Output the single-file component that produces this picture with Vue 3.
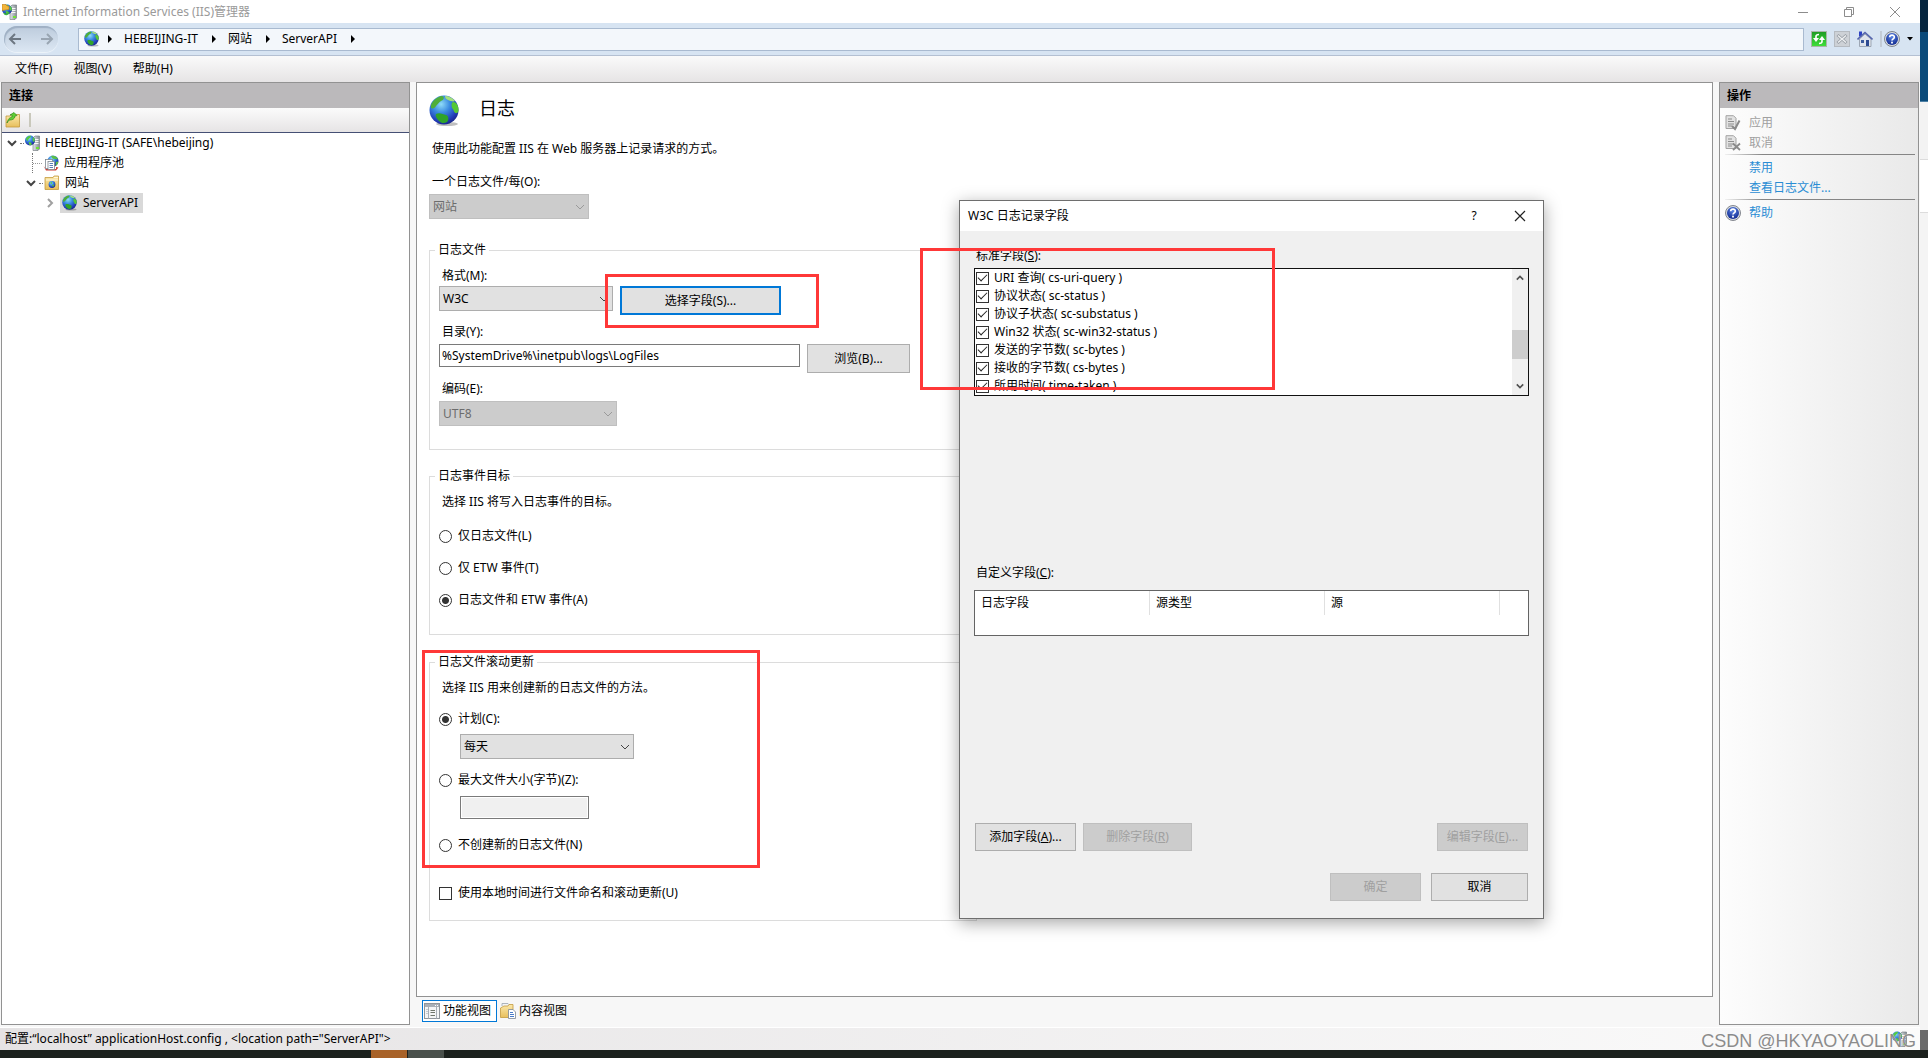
<script setup>
import { ref } from 'vue'

const crumbs = ['HEBEIJING-IT', '网站', 'ServerAPI']
const menus = ['文件(F)', '视图(V)', '帮助(H)']

const directory = ref('%SystemDrive%\\inetpub\\logs\\LogFiles')
const target = ref('both')
const rollover = ref('schedule')
const localTime = ref(false)
const maxSize = ref('')

const targets = [
  { id: 'file', label: '仅日志文件(L)' },
  { id: 'etw', label: '仅 ETW 事件(T)' },
  { id: 'both', label: '日志文件和 ETW 事件(A)' },
]

const fields = ref([
  { id: 'cs-uri-query', label: 'URI 查询( cs-uri-query )', on: true },
  { id: 'sc-status', label: '协议状态( sc-status )', on: true },
  { id: 'sc-substatus', label: '协议子状态( sc-substatus )', on: true },
  { id: 'sc-win32-status', label: 'Win32 状态( sc-win32-status )', on: true },
  { id: 'sc-bytes', label: '发送的字节数( sc-bytes )', on: true },
  { id: 'cs-bytes', label: '接收的字节数( cs-bytes )', on: true },
  { id: 'time-taken', label: '所用时间( time-taken )', on: true },
])
</script>

<template>
  <div class="screen">
    <svg class="sprite" aria-hidden="true">
      <defs>
        <radialGradient id="sea" cx="0.4" cy="0.3" r="0.75">
          <stop offset="0" stop-color="#8fdcf8" />
          <stop offset="0.4" stop-color="#3a8be0" />
          <stop offset="0.8" stop-color="#2138b4" />
          <stop offset="1" stop-color="#16237c" />
        </radialGradient>
        <linearGradient id="folder" x1="0" y1="0" x2="0" y2="1">
          <stop offset="0" stop-color="#fbe9ac" />
          <stop offset="1" stop-color="#e8bf5c" />
        </linearGradient>
        <linearGradient id="tower" x1="0" y1="0" x2="1" y2="0">
          <stop offset="0" stop-color="#e3e7ea" />
          <stop offset="1" stop-color="#848c92" />
        </linearGradient>
        <linearGradient id="green" x1="0" y1="0" x2="0" y2="1">
          <stop offset="0" stop-color="#1f9a24" />
          <stop offset="1" stop-color="#3fe03a" />
        </linearGradient>
        <radialGradient id="helpfill" cx="0.5" cy="0.3" r="0.7">
          <stop offset="0" stop-color="#5b86e6" />
          <stop offset="1" stop-color="#10298f" />
        </radialGradient>
      </defs>
      <symbol id="globe" viewBox="0 0 32 32">
        <ellipse cx="18" cy="29" rx="11" ry="2" fill="#000" opacity="0.25" />
        <circle cx="15" cy="15" r="14.500" fill="url(#sea)" />
        <path d="M2 10C4 5 9 1.500 13 1C16 2 15 5 12 6C10 7 9 9 7 11C6 13 4 14 2 13Z" fill="#4fae3a" />
        <path d="M16 1C20 1 24 3 26 6C24 7 21 6 19 5C17 4 16 3 16 1Z" fill="#a5e07c" />
        <path d="M24 7C28 7 30 12 29.500 16C28 20 25 18 24.500 15C22 12 22 8 24 7Z" fill="#55c834" />
        <path d="M7 19C10 17 14 19 17 20C20 21 20 25 18 27C15 29 12 28 10 26C8 24 6 21 7 19Z" fill="#2fa32a" />
      </symbol>
      <symbol id="server" viewBox="0 0 16 16">
        <path d="M8 3L10 1H14.500V14L13 15.500H8Z" fill="url(#tower)" stroke="#6b7379" stroke-width="0.6" />
        <path d="M9 4.500H13.500M9 6.500H13.500M9 8.500H13.500" stroke="#fff" stroke-width="0.9" />
        <rect x="11" y="12" width="3" height="2" fill="#6fe336" />
        <circle cx="5" cy="5.500" r="5" fill="url(#sea)" />
        <path d="M1 3.500C3 1 5 .500 6 1C6 3 3 3 3 6C2 6 1 5 1 3.500ZM8 2C10 3 10.500 6 9 7C8 7 7 4 8 2ZM4 7C6 7 7 8 6.500 10C5 11 3 9 4 7Z" fill="#57c93f" />
      </symbol>
      <symbol id="appicon" viewBox="0 0 16 16">
        <use href="#server" />
        <path d="M0 .500H4L5 2H7V5.500L0 6.500Z" fill="#f3b53b" stroke="#b87a14" stroke-width="0.6" />
        <path d="M2 9C3 11 6 11 7 8" fill="none" stroke="#3bb340" stroke-width="1.600" />
      </symbol>
      <symbol id="pool" viewBox="0 0 16 16">
        <circle cx="10" cy="6" r="5.500" fill="url(#sea)" />
        <path d="M8 1C11 0 14 2 15 4C13 5 12 3 10 4ZM13 7L15.400 6.500C15 9 14 10 12.500 11Z" fill="#5bc043" />
        <path d="M0.500 11L3 15.500H13L15.500 12.500L13 12V14H3Z" fill="#cf3b32" />
        <rect x="2.500" y="4.500" width="7" height="9" fill="#fff" stroke="#7d8790" stroke-width="0.800" />
        <rect x="5" y="6.500" width="6.500" height="8" fill="#fff" stroke="#7d8790" stroke-width="0.800" />
        <path d="M6.500 8.500H10M6.500 10.500H10M6.500 12.500H10" stroke="#4b6fae" stroke-width="0.900" />
      </symbol>
      <symbol id="sites" viewBox="0 0 16 16">
        <path d="M1 2.500H9L10 1H14.500V14.500H1Z" fill="url(#folder)" stroke="#c49a3d" stroke-width="0.800" />
        <path d="M10 2.500H14M2 5H14" stroke="#fff8dc" />
        <circle cx="8" cy="9.500" r="3.400" fill="url(#sea)" />
        <path d="M6 8L8 7L8 9ZM8 10L10.500 9.500L9 12Z" fill="#55c43c" />
      </symbol>
      <symbol id="connect" viewBox="0 0 16 16">
        <path d="M1 4H5L6 2.500H14.500V15H1Z" fill="url(#folder)" stroke="#c49a3d" stroke-width="0.800" />
        <path d="M2 11C3 7 5 5 7 5V3L5 3L9 .500L12 3.500L10 4C10 7 7 8 5 8C4 8 3 9 2 11Z" fill="#5fce35" stroke="#2f8a1c" stroke-width="0.700" />
      </symbol>
      <symbol id="help" viewBox="0 0 16 16">
        <circle cx="8" cy="8" r="7.500" fill="#d9dde2" stroke="#767b82" stroke-width="0.900" />
        <circle cx="8" cy="8" r="6" fill="url(#helpfill)" />
        <path d="M5.700 6.300C5.700 3.400 10.400 3.500 10.300 6.200C10.200 7.800 8 7.900 8 9.600" fill="none" stroke="#fff" stroke-width="1.700" />
        <rect x="7.100" y="10.700" width="1.800" height="1.800" fill="#fff" />
      </symbol>
      <symbol id="refresh" viewBox="0 0 16 16">
        <rect x="0.500" y="0.500" width="15" height="15" fill="url(#green)" stroke="#a9b5a9" />
        <path d="M2 7H8L5 11ZM8 9H14L11 5Z" fill="#fff" />
        <path d="M5 8V5.500C5 4 6 3.500 8 3.500M11 8V10.500C11 12 10 12.500 8 12.500" fill="none" stroke="#fff" stroke-width="1.600" />
      </symbol>
      <symbol id="stop" viewBox="0 0 16 16">
        <rect x="0.500" y="0.500" width="15" height="15" fill="#cdd1d6" stroke="#b5bac0" />
        <path d="M3.500 4L12.500 12M12.500 4L3.500 12" stroke="#969ca3" stroke-width="3" />
        <path d="M4 4.500L12 11.500M12 4.500L4 11.500" stroke="#eef0f2" stroke-width="1.400" />
      </symbol>
      <symbol id="home" viewBox="0 0 16 16">
        <rect x="2" y="0.500" width="3" height="5" fill="#2c41c4" />
        <path d="M2.500 8L8 3L14 8V15.500H2.500Z" fill="#dfe4ec" stroke="#8d97a6" stroke-width="0.800" />
        <path d="M0.500 8.500L8 1.500L15.500 8.500" fill="none" stroke="#5665ad" stroke-width="1.600" />
        <rect x="4" y="9" width="3" height="3" fill="#3c5b9d" />
        <rect x="9" y="9" width="3" height="6" fill="#2d4a91" />
      </symbol>
      <symbol id="docapply" viewBox="0 0 16 16">
        <path d="M1 .700H8.500L11 3.200V13.500H1Z" fill="#e2e2e2" stroke="#a3a3a3" />
        <path d="M3 4H7M3 6.500H9M3 9H9M3 11H7" stroke="#8e8e8e" />
        <path d="M7 11L10 14L14.500 5.500" fill="none" stroke="#8a8a8a" stroke-width="2" />
      </symbol>
      <symbol id="doccancel" viewBox="0 0 16 16">
        <path d="M1 .700H8.500L11 3.200V13.500H1Z" fill="#e2e2e2" stroke="#a3a3a3" />
        <path d="M3 4H7M3 6.500H9M3 9H9M3 11H7" stroke="#8e8e8e" />
        <path d="M8 8.500L15 15M15 8.500L8 15" stroke="#8a8a8a" stroke-width="1.800" />
      </symbol>
      <symbol id="features" viewBox="0 0 16 16">
        <rect x="0.500" y="0.500" width="15" height="15" fill="#f4f5f6" stroke="#8f959c" />
        <rect x="1" y="1" width="14" height="3" fill="#a9afb7" />
        <path d="M11 2.500H12M13 2.500H14" stroke="#fff" />
        <path d="M4.500 4V15.500M12.500 4V15.500" stroke="#a9afb7" />
        <path d="M6.500 7.500H11M6.500 9.500H11M6.500 12.500H11" stroke="#70766c" />
        <path d="M2 6.500H4M2 8.500H4M2 10.500H4" stroke="#c7ccd2" />
      </symbol>
      <symbol id="content" viewBox="0 0 16 16">
        <path d="M2 3V.500H8L9 1.500V4" fill="#f2f4f7" stroke="#9aa3ad" stroke-width="0.800" />
        <path d="M.500 14.500V5L4 3H8L9 1.500H13V14.500Z" fill="url(#folder)" stroke="#c49a3d" stroke-width="0.800" />
        <path d="M8.500 6.500H13L15.500 9V15.500H8.500Z" fill="#fff" stroke="#7b8794" stroke-width="0.800" />
        <path d="M10 9.500H13M10 11.500H14M10 13.500H14" stroke="#4a7bc8" />
      </symbol>
      <symbol id="chevron" viewBox="0 0 10 10">
        <path d="M1 3L5 7L9 3" fill="none" stroke="currentColor" />
      </symbol>
      <symbol id="boldchevron" viewBox="0 0 10 10">
        <path d="M1 3L5 7L9 3" fill="none" stroke="currentColor" stroke-width="2" />
      </symbol>
    </svg>

    <div class="desktop">
      <div class="window">
        <header class="titlebar">
          <svg class="i16"><use href="#appicon" /></svg>
          <h1>Internet Information Services (IIS)管理器</h1>
          <div class="controls">
            <button type="button" aria-label="最小化"><svg viewBox="0 0 10 10"><path d="M0 5.500H10" /></svg></button>
            <button type="button" aria-label="还原"><svg viewBox="0 0 10 10"><path d="M.500 2.500H7.500V9.500H.500ZM2.500 2V.500H9.500V7.500H8" /></svg></button>
            <button type="button" aria-label="关闭"><svg viewBox="0 0 10 10"><path d="M0 0L10 10M10 0L0 10" /></svg></button>
          </div>
        </header>

        <nav class="navbar">
          <div class="travel">
            <button type="button" aria-label="后退"><svg viewBox="0 0 14 12"><path d="M13 6H2M7 1L2 6L7 11" /></svg></button>
            <button type="button" class="forward" aria-label="前进"><svg viewBox="0 0 14 12"><path d="M1 6H12M7 1L12 6L7 11" /></svg></button>
          </div>
          <div class="address">
            <svg class="i16"><use href="#globe" /></svg>
            <template v-for="c in crumbs" :key="c">
              <svg class="tri" viewBox="0 0 4 8"><path d="M0 0L4 4L0 8Z" /></svg>
              <a href="#">{{ c }}</a>
            </template>
            <svg class="tri" viewBox="0 0 4 8"><path d="M0 0L4 4L0 8Z" /></svg>
          </div>
          <div class="tools">
            <button type="button" aria-label="刷新"><svg class="i16"><use href="#refresh" /></svg></button>
            <button type="button" aria-label="停止"><svg class="i16"><use href="#stop" /></svg></button>
            <button type="button" aria-label="主页"><svg class="i16"><use href="#home" /></svg></button>
            <button type="button" class="helpmenu" aria-label="帮助">
              <svg class="i16"><use href="#help" /></svg>
              <svg class="caret" viewBox="0 0 6 4"><path d="M0 0H6L3 3.500Z" /></svg>
            </button>
          </div>
        </nav>

        <div class="menubar">
          <button v-for="m in menus" :key="m" type="button">{{ m }}</button>
        </div>

        <div class="body">
          <aside class="panel connections">
            <h2>连接</h2>
            <div class="toolbar">
              <button type="button" aria-label="连接到"><svg class="i16"><use href="#connect" /></svg></button>
              <span class="bar"></span>
            </div>
            <div class="tree">
              <div class="node root">
                <svg class="tw"><use href="#boldchevron" /></svg><i class="dots"></i>
                <svg class="i16"><use href="#server" /></svg><span>HEBEIJING-IT (SAFE\hebeijing)</span>
              </div>
              <div class="node pool">
                <i class="elbow"></i>
                <svg class="i16"><use href="#pool" /></svg><span>应用程序池</span>
              </div>
              <div class="node sites">
                <svg class="tw"><use href="#boldchevron" /></svg><i class="dots"></i>
                <svg class="i16"><use href="#sites" /></svg><span>网站</span>
              </div>
              <div class="node site">
                <svg class="tw closed"><use href="#boldchevron" /></svg>
                <div class="selected"><svg class="i16"><use href="#globe" /></svg><span>ServerAPI</span></div>
              </div>
            </div>
          </aside>

          <main class="center">
            <section class="panel page">
              <div class="pagehead">
                <svg class="i32"><use href="#globe" /></svg>
                <h2>日志</h2>
              </div>
              <p class="intro">使用此功能配置 IIS 在 Web 服务器上记录请求的方式。</p>
              <label class="cap per" for="per">一个日志文件/每(O):</label>
              <div class="combo w160 off">
                <select id="per" disabled><option>网站</option></select>
                <svg><use href="#chevron" /></svg>
              </div>

              <fieldset class="files">
                <legend>日志文件</legend>
                <label class="cap" for="format">格式(M):</label>
                <div class="line format">
                  <div class="combo w174">
                    <select id="format"><option>W3C</option></select>
                    <svg><use href="#chevron" /></svg>
                  </div>
                  <button type="button" class="btn focus">选择字段(S)...</button>
                </div>
                <label class="cap" for="dir">目录(Y):</label>
                <div class="line dir">
                  <input id="dir" v-model="directory" class="text" type="text" />
                  <button type="button" class="btn browse">浏览(B)...</button>
                </div>
                <label class="cap" for="enc">编码(E):</label>
                <div class="combo w178 off enc">
                  <select id="enc" disabled><option>UTF8</option></select>
                  <svg><use href="#chevron" /></svg>
                </div>
              </fieldset>

              <fieldset class="targets">
                <legend>日志事件目标</legend>
                <p class="cap">选择 IIS 将写入日志事件的目标。</p>
                <label v-for="t in targets" :key="t.id" class="opt">
                  <input v-model="target" type="radio" name="target" :value="t.id" />{{ t.label }}
                </label>
              </fieldset>

              <fieldset class="roll">
                <legend>日志文件滚动更新</legend>
                <p class="cap">选择 IIS 用来创建新的日志文件的方法。</p>
                <label class="opt first"><input v-model="rollover" type="radio" name="roll" value="schedule" />计划(C):</label>
                <div class="combo w174 indent">
                  <select aria-label="计划"><option>每天</option></select>
                  <svg><use href="#chevron" /></svg>
                </div>
                <label class="opt size"><input v-model="rollover" type="radio" name="roll" value="size" />最大文件大小(字节)(Z):</label>
                <input v-model="maxSize" class="text max" type="text" disabled aria-label="最大文件大小" />
                <label class="opt none"><input v-model="rollover" type="radio" name="roll" value="none" />不创建新的日志文件(N)</label>
                <label class="opt local"><input v-model="localTime" type="checkbox" />使用本地时间进行文件命名和滚动更新(U)</label>
              </fieldset>
            </section>
            <div class="views">
              <button type="button" class="active"><svg class="i16"><use href="#features" /></svg>功能视图</button>
              <button type="button"><svg class="i16"><use href="#content" /></svg>内容视图</button>
            </div>
          </main>

          <aside class="panel actions">
            <h2>操作</h2>
            <div class="act">
              <button type="button" disabled><svg class="i16"><use href="#docapply" /></svg>应用</button>
              <button type="button" disabled><svg class="i16"><use href="#doccancel" /></svg>取消</button>
            </div>
            <div class="act ruled">
              <a class="plain" href="#">禁用</a>
              <a class="plain" href="#">查看日志文件...</a>
            </div>
            <div class="act ruled">
              <a href="#"><svg class="i16"><use href="#help" /></svg>帮助</a>
            </div>
          </aside>
        </div>

        <footer class="status">
          <span>配置:“localhost” applicationHost.config , &lt;location path="ServerAPI"&gt;</span>
          <svg class="i16"><use href="#server" /></svg>
        </footer>
      </div>
      <div class="behind"><i class="navy"></i><i class="blue"></i><i class="grey"></i><i class="white"></i><i class="rest"></i><i class="foot"></i></div>
    </div>
    <div class="taskbar"><i class="orange"></i><i class="slate"></i></div>

    <div class="dialog" role="dialog" aria-labelledby="dlg">
      <header>
        <h2 id="dlg">W3C 日志记录字段</h2>
        <button type="button">?</button>
        <button type="button" aria-label="关闭"><svg viewBox="0 0 12 12"><path d="M1 1L11 11M11 1L1 11" /></svg></button>
      </header>
      <div class="dlgbody">
        <p class="dcap">标准字段(<u>S</u>):</p>
        <div class="list">
          <div class="items">
            <label v-for="f in fields" :key="f.id"><input v-model="f.on" type="checkbox" />{{ f.label }}</label>
          </div>
          <div class="scroll">
            <svg class="up"><use href="#boldchevron" /></svg>
            <i></i>
            <svg class="down"><use href="#boldchevron" /></svg>
          </div>
        </div>
        <p class="dcap custom">自定义字段(<u>C</u>):</p>
        <div class="grid">
          <table>
            <thead><tr><th>日志字段</th><th>源类型</th><th>源</th><td></td></tr></thead>
          </table>
        </div>
        <div class="row edit">
          <button type="button" class="btn add">添加字段(<u>A</u>)...</button>
          <button type="button" class="btn del" disabled>删除字段(<u>R</u>)</button>
          <button type="button" class="btn mod" disabled>编辑字段(<u>E</u>)...</button>
        </div>
        <div class="row done">
          <button type="button" class="btn ok" disabled>确定</button>
          <button type="button" class="btn cancel">取消</button>
        </div>
      </div>
    </div>

    <div class="mark mark-button"></div>
    <div class="mark mark-fields"></div>
    <div class="mark mark-roll"></div>
    <div class="credit">CSDN @HKYAOYAOLING</div>
  </div>
</template>

<style>
body { margin: 0; }
</style>

<style scoped>
.screen {
  position: relative;
  display: flex;
  flex-direction: column;
  min-height: 100vh;
  overflow: hidden;
  background: #f7f7f7;
  color: #000;
  font: 12px/20px "Noto Sans", "Noto Sans CJK SC", sans-serif;
}
.screen *, .screen *::before, .screen *::after { box-sizing: border-box; }
.sprite { position: absolute; width: 0; height: 0; }
.i16 { flex: none; display: block; width: 16px; height: 16px; }
.i32 { flex: none; display: block; width: 32px; height: 32px; }
h1, h2, p { margin: 0; font: inherit; }
button, input, select { margin: 0; font: inherit; color: inherit; }
button { padding: 0; border: 0; background: none; white-space: nowrap; }
a { color: inherit; text-decoration: none; }

.desktop { flex: 1; display: flex; }
.window { flex: 1; min-width: 0; display: flex; flex-direction: column; }

.behind { width: 8px; display: flex; flex-direction: column; }
.behind .navy { height: 32px; background: #06263f; }
.behind .blue { height: 70px; background: #0a4a7a; border-bottom: 1px solid #4c7fa4; }
.behind .grey { height: 58px; background: #f3f3f3; border-bottom: 1px solid #dcdcdc; }
.behind .white { height: 53px; background: #fff; border-bottom: 1px solid #dcdcdc; }
.behind .rest { flex: 1; background: #f4f4f4; }
.behind .foot { height: 20px; background: #6b6b6b; }

.taskbar { height: 8px; padding-left: 371px; display: flex; gap: 1px; background: #1b211d; }
.taskbar i { width: 36px; }
.taskbar .orange { background: #a86228; }
.taskbar .slate { background: #49504b; }

.titlebar { height: 23px; padding-left: 2px; display: flex; align-items: center; gap: 5px; background: #fff; color: #9a9a9a; }
.controls { margin-left: auto; display: flex; align-items: center; padding-right: 2px; }
.controls button { width: 46px; height: 20px; display: grid; place-items: center; }
.controls svg { width: 10px; height: 10px; fill: none; stroke: #8c8c8c; }

.navbar { height: 33px; display: flex; align-items: center; padding-left: 4px; background: #d7e4f2; border-bottom: 1px solid #b4c0d2; }
.travel {
  width: 54px; height: 26px; margin-right: 20px; padding: 0 4px;
  display: flex; align-items: center; justify-content: space-between;
  border-radius: 13px; background: linear-gradient(#bccbdc, #dce7f3);
  box-shadow: inset 1px 2px 1px #9fb0c4, 0 1px 1px #eef4fa;
}
.travel button { height: 12px; }
.travel svg { display: block; width: 14px; height: 12px; fill: none; stroke: #6d7782; stroke-width: 2; }
.travel .forward svg { stroke: #99a5b2; }
.address {
  flex: 1; height: 23px; padding-left: 5px; display: flex; align-items: center;
  border: 1px solid #a9bad0; background: #f3f7fb;
}
.address .tri { width: 4px; height: 8px; margin: 0 12px 0 14px; }
.address .i16 + .tri { margin-left: 8px; }
.tools { display: flex; align-items: center; gap: 7px; padding: 0 7px; width: 116px; }
.helpmenu { display: flex; align-items: center; gap: 7px; padding-left: 2px; border-left: 2px solid #c3ccd6; }
.caret { width: 6px; height: 4px; }

.menubar { height: 26px; padding: 0 15px; display: flex; gap: 21px; background: linear-gradient(#fafafa, #e6e4e5); }

.body { flex: 1; display: flex; gap: 6px; padding: 0 1px 2px; }
.panel { border: 1px solid #929292; background: #fff; }
.panel > h2 { height: 25px; padding-left: 7px; line-height: 25px; font-weight: bold; background: #bbb9bb; }
.connections { width: 409px; }
.toolbar { height: 25px; padding-left: 3px; display: flex; align-items: center; gap: 8px; background: linear-gradient(#fbfbfb, #e6e4e5); border-bottom: 1px solid #454f74; }
.bar { width: 2px; height: 14px; background: #c9c8bb; }

.node { height: 20px; display: flex; align-items: center; color: #000; }
.node span { white-space: nowrap; }
.tw { width: 10px; height: 10px; color: #444; }
.tw.closed { color: #a0a0a0; transform: rotate(-90deg); }
.dots { width: 4px; margin: 0 1px 0 3px; border-top: 1px dotted #777; }
.root { padding-left: 5px; }
.root span { margin-left: 4px; }
.pool { padding-left: 30px; }
.pool span, .sites span { margin-left: 5px; }
.elbow { width: 11px; height: 20px; border-left: 1px dotted #777; background: linear-gradient(90deg, #999 50%, transparent 50%) 0 10px / 2px 1px repeat-x; }
.sites { padding-left: 24px; }
.site { padding-left: 43px; gap: 5px; }
.selected { height: 20px; padding: 0 5px 0 2px; display: flex; gap: 5px; align-items: center; background: #d9d9d9; }

.center { flex: 1; min-width: 0; display: flex; flex-direction: column; }
.page { flex: 1; padding: 12px; }
.pagehead { display: flex; gap: 18px; }
.pagehead h2 { font-size: 18px; line-height: 26px; }
.intro { margin-top: 12px; padding-left: 3px; }
.cap { display: block; padding-left: 3px; }
.per { margin: 13px 0 2px; }

.combo { display: grid; height: 25px; align-items: center; }
.combo > * { grid-area: 1 / 1; }
.combo select { appearance: none; width: 100%; height: 25px; padding: 0 3px; border: 1px solid #adadad; border-radius: 0; background: #e1e1e1; opacity: 1; }
.combo svg { justify-self: end; width: 10px; height: 10px; margin-right: 4px; color: #444; pointer-events: none; }
.combo.off { color: #6d6d6d; }
.combo.off select { background: #ccc; border-color: #bfbfbf; }
.combo.off svg { color: #9a9a9a; }
.w160 { width: 160px; }
.w174 { width: 174px; }
.w178 { width: 178px; }

fieldset { width: 548px; min-width: 0; margin: 21px 0 0; padding: 6px 9px 0; border: 1px solid #dcdcdc; }
legend { margin-left: -4px; padding: 0 3px; }
.line { display: flex; align-items: flex-start; gap: 7px; }
.format { margin: 0 0 7px; }
.dir { margin: 2px 0 6px; }
.enc { margin: 2px 0 0; }
.files { padding-bottom: 23px; }
.btn { height: 28px; border: 1px solid #adadad; background: #e1e1e1; }
.btn:disabled { background: #ccc; border-color: #bfbfbf; color: #a0a0a0; }
.focus { width: 161px; height: 29px; border: 2px solid #0078d7; }
.browse { width: 103px; height: 29px; }
.text { width: 361px; height: 23px; padding: 0 2px; border: 1px solid #7a7a7a; border-radius: 0; background: #fff; }
.targets { margin-top: 16px; padding-bottom: 24px; }
.targets .cap { margin-bottom: 14px; }
.opt { display: flex; align-items: center; gap: 6px; }
.targets .opt + .opt { margin-top: 12px; }
.roll { margin-top: 17px; padding-bottom: 17px; }
.opt.first { margin: 11px 0 5px; }
.indent { margin-left: 21px; }
.opt.size { margin: 11px 0 6px; }
.text.max { display: block; width: 129px; margin-left: 21px; background: #f0f0f0; box-shadow: inset 0 0 0 1px #fff; }
.opt.none { margin-top: 16px; }
.opt.local { margin-top: 28px; }

input[type="radio"], input[type="checkbox"] { appearance: none; flex: none; width: 13px; height: 13px; border: 1px solid #333; background: #fff; }
input[type="radio"] { border-radius: 50%; }
input[type="radio"]:checked { background: radial-gradient(circle, #333 3px, #fff 4px); }

.views { display: flex; gap: 1px; padding: 3px 0 3px 6px; }
.views button { height: 22px; padding: 0 5px 0 1px; display: flex; align-items: center; gap: 3px; border: 1px solid transparent; }
.views .active { border-color: #0078d7; background: #fff; }

.actions { width: 200px; background: linear-gradient(90deg, #fdfdfd, #e9e9e9); }
.act { margin: 0 3px 0 5px; display: flex; flex-direction: column; }
.act:nth-child(2) { padding-top: 5px; }
.act button, .act a { height: 20px; display: flex; align-items: center; gap: 8px; color: #2a8dd4; }
.act button:disabled { color: #a0a0a0; }
.act .plain { padding-left: 24px; }
.act.ruled { margin-top: 1px; padding-top: 3px; border-top: 1px solid; border-image: linear-gradient(90deg, #f4f4f4, #858585 20%, #858585) 1; }

.status { height: 23px; padding: 0 12px 0 5px; display: flex; align-items: center; justify-content: space-between; background: linear-gradient(90deg, #e5e3e4, #fbfbfb); border-top: 1px solid #fff; }

.dialog {
  position: absolute; left: 959px; top: 200px; width: 585px;
  border: 1px solid #6e6e6e; background: #f0f0f0;
  box-shadow: 0 4px 16px rgba(0, 0, 0, 0.35);
}
.dialog header { height: 30px; padding-left: 8px; display: flex; align-items: center; background: #fff; }
.dialog h2 { flex: 1; }
.dialog header button { width: 46px; height: 30px; display: grid; place-items: center; }
.dialog header svg { width: 12px; height: 12px; fill: none; stroke: #222; stroke-width: 1.2; }
.dlgbody { padding: 15px 14px 17px; }
.dcap { padding-left: 2px; }
.list { height: 128px; margin-top: 2px; display: flex; border: 1px solid #111; background: #fff; }
.items { flex: 1; overflow: hidden; padding-left: 1px; }
.items label { height: 18px; display: flex; align-items: center; gap: 5px; }
.items input { display: grid; place-items: center; }
.items input::after { content: ""; width: 9px; height: 5px; margin-top: -3px; border-left: 1px solid #222; border-bottom: 1px solid #222; transform: rotate(-45deg); }
.scroll { width: 16px; display: flex; flex-direction: column; align-items: center; justify-content: space-between; padding: 4px 0; background: #f0f0f0; color: #505050; }
.scroll svg { width: 8px; height: 10px; }
.scroll .up { transform: rotate(180deg); }
.scroll i { width: 16px; height: 29px; margin-top: 24px; background: #cdcdcd; }
.custom { margin-top: 167px; }
.grid { height: 46px; margin-top: 7px; border: 1px solid #646464; background: #fff; }
table { width: 100%; border-collapse: separate; border-spacing: 0; table-layout: fixed; }
th { width: 175px; height: 24px; padding: 0 6px; border-right: 1px solid #e0e0e0; font-weight: normal; text-align: left; }
td { padding: 0; }
.row { display: flex; padding: 0 1px; }
.edit { margin-top: 187px; gap: 7px; }
.add { width: 101px; }
.del { width: 109px; }
.mod { width: 91px; margin-left: auto; }
.done { margin-top: 22px; gap: 10px; justify-content: flex-end; }
.ok { width: 91px; }
.cancel { width: 97px; }

.mark { position: absolute; border: 3px solid #ff3838; pointer-events: none; }
.mark-button { left: 605px; top: 274px; width: 214px; height: 54px; }
.mark-fields { left: 920px; top: 248px; width: 355px; height: 142px; }
.mark-roll { left: 422px; top: 650px; width: 338px; height: 218px; }
.credit { position: absolute; right: 12px; bottom: 6px; font: 18px/22px "Liberation Sans", sans-serif; color: #8c8c8c; text-shadow: 0 0 1px #fff; }
</style>
